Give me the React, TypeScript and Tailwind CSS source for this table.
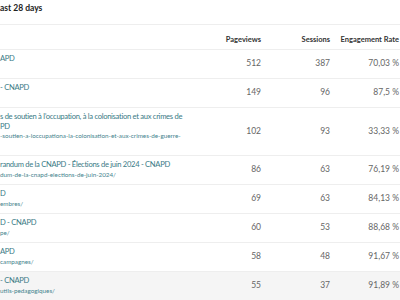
import React from 'react';

type Row = {
  title: string[];
  url: string[];
  pageviews: number;
  sessions: number;
  rate: string;
  hover?: boolean;
};

// first column is scrolled off to the left, only the tail of each text shows
const rows: Row[] = [
  { title: ['APD'], url: [''], pageviews: 512, sessions: 387, rate: '70,03 %' },
  { title: ['- CNAPD'], url: [''], pageviews: 149, sessions: 96, rate: '87,5 %' },
  {
    title: ['s de soutien à l’occupation, à la colonisation et aux crimes de', 'PD'],
    url: ['-soutien-a-loccupationa-la-colonisation-et-aux-crimes-de-guerre-', ''],
    pageviews: 102,
    sessions: 93,
    rate: '33,33 %',
  },
  {
    title: ['randum de la CNAPD - Élections de juin 2024 - CNAPD'],
    url: ['dum-de-la-cnapd-elections-de-juin-2024/'],
    pageviews: 86,
    sessions: 63,
    rate: '76,19 %',
  },
  { title: ['D'], url: ['embres/'], pageviews: 69, sessions: 63, rate: '84,13 %' },
  { title: ['D - CNAPD'], url: ['pe/'], pageviews: 60, sessions: 53, rate: '88,68 %' },
  { title: ['APD'], url: ['campagnes/'], pageviews: 58, sessions: 48, rate: '91,67 %' },
  { title: ['- CNAPD'], url: ['utils-pedagogiques/'], pageviews: 55, sessions: 37, rate: '91,89 %', hover: true },
];

export default function App() {
  return (
    <div className="w-[400px] h-[300px] overflow-hidden bg-white font-['Lato',sans-serif]">
      <div className="h-[24px] pb-[8px] flex items-center text-[8.5px] font-bold text-[#222]">ast 28 days</div>

      {/* header */}
      <div className="flex h-[26px] pt-[6px] items-center border-t border-b border-[#eeeeee] text-[7.5px] font-bold text-[#333]">
        <div className="w-[195px]" />
        <div className="w-[66px] text-right">Pageviews</div>
        <div className="w-[69px] text-right">Sessions</div>
        <div className="w-[69px] text-right whitespace-nowrap">Engagement Rate</div>
      </div>

      {rows.map((r, i) => (
        <div
          key={i}
          className={`flex items-center border-b border-[#eeeeee] pt-[4px] pb-[5px] ${r.hover ? 'bg-[#f5f5f5]' : ''}`}
        >
          <div className="w-[195px] flex flex-col whitespace-nowrap text-[#3a7b86]">
            {r.title.map((t, j) => (
              <span key={j} className="text-[7.6px] tracking-[-0.3px] leading-[9.5px] h-[9.5px]">
                {t}
              </span>
            ))}
            {r.url.map((u, j) => (
              <span key={j} className="text-[6.3px] leading-[9.5px] h-[9.5px] text-[#44838d]">
                {u}
              </span>
            ))}
          </div>
          <div className="w-[66px] text-right text-[8.5px] text-[#666]">{r.pageviews}</div>
          <div className="w-[69px] text-right text-[8.5px] text-[#666]">{r.sessions}</div>
          <div className="w-[69px] text-right text-[8.5px] text-[#666]">{r.rate}</div>
        </div>
      ))}
    </div>
  );
}
